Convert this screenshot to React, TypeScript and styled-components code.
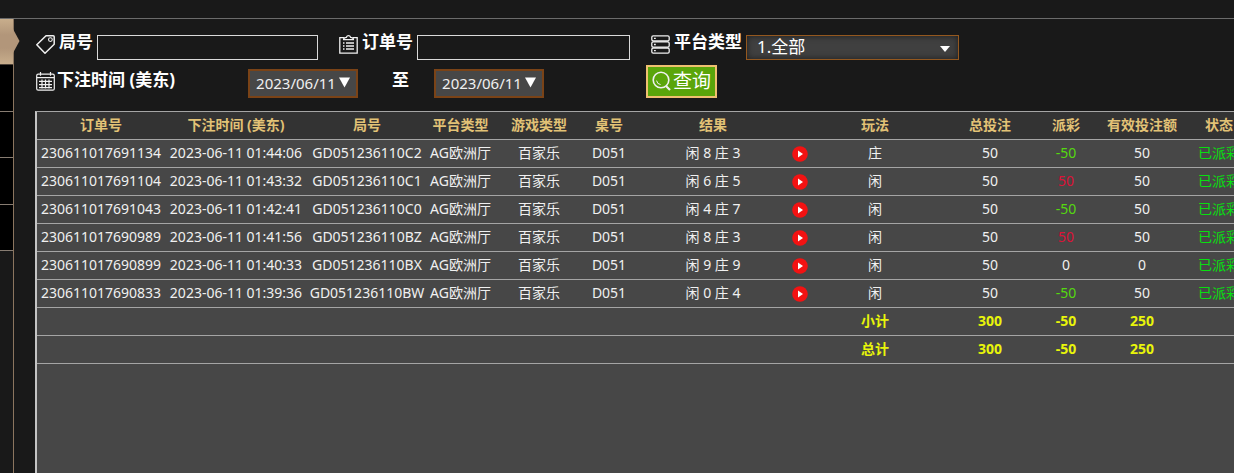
import React from "react";
import styled, { createGlobalStyle } from "styled-components";

const GlobalStyle = createGlobalStyle`
  *, *::before, *::after { box-sizing: border-box; }
  html, body, #root { height: 100%; }
  body {
    margin: 0;
    overflow: hidden;
    background: #191919;
    color: #f2f2f2;
    font-family: "Noto Sans", "Noto Sans CJK SC", sans-serif;
    font-size: 14px;
  }
  button, input, select { font-family: inherit; margin: 0; }
`;

const Page = styled.div`
  display: flex;
  flex-direction: column;
  height: 100%;
`;

const TopStrip = styled.header`
  flex: none;
  height: 19px;
  border-bottom: 1px solid #6b6b6b;
`;

const Body = styled.div`
  flex: 1;
  display: flex;
  min-height: 0;
`;

const Rail = styled.nav`
  flex: none;
  width: 14px;
  border-right: 1px solid #8b755f;
`;

const RailGroup = styled.div`
  display: flex;
  flex-direction: column;
  height: 186px;
`;

const RailTab = styled.button`
  flex: 1;
  width: 100%;
  padding: 0;
  border: 0;
  border-bottom: 1px solid #877c72;
  background: #000;
`;

const ActiveTab = styled.button`
  position: relative;
  display: block;
  width: 100%;
  height: 46px;
  padding: 0;
  border: 0;
  border-bottom: 1px solid #4d4238;
  background: linear-gradient(#c8ae8c, #b2967a 35%, #b2967a 65%, #c8ae8c);
`;

const TabPointer = styled.svg`
  position: absolute;
  left: 100%;
  top: 10px;
  z-index: 1;
`;

const Main = styled.main`
  flex: 1;
  min-width: 0;
  display: flex;
  flex-direction: column;
  padding: 16px 0 0 21px;
`;

const Filters = styled.form`
  flex: none;
  display: flex;
  flex-direction: column;
  gap: 5px;
  padding: 0 0 13px 1px;
`;

const FilterRow = styled.div`
  display: flex;
`;

const Field = styled.div<{ $width: number }>`
  flex: none;
  display: flex;
  align-items: flex-start;
  gap: 4px;
  width: ${(p) => p.$width}px;
  margin-right: 21px;
`;

const FieldLabel = styled.label`
  flex: none;
  font-size: 17px;
  font-weight: 700;
  line-height: 14px;
  color: #fff;
  white-space: nowrap;
`;

const TextInput = styled.input`
  flex: 1;
  min-width: 0;
  height: 25px;
  padding: 0 6px;
  border: 1px solid #d9d9d9;
  background: transparent;
  color: #fff;
  font-size: 15px;
`;

const SelectBox = styled.div`
  position: relative;
  flex: 1;
  min-width: 0;
`;

const Select = styled.select`
  display: block;
  width: 100%;
  height: 25px;
  padding: 0 24px 2px 10px;
  border: 1px solid #94581f;
  border-radius: 0;
  appearance: none;
  background: #404040;
  box-shadow: inset 0 0 6px #1c1c1c;
  color: #fff;
  font-size: 17px;
  line-height: 20px;
`;

const Caret = styled.svg`
  position: absolute;
  right: 9px;
  top: 11px;
  pointer-events: none;
`;

const DateGroup = styled.div`
  flex: none;
  display: flex;
  gap: 2px;
  width: 610px;
`;

const DateCaption = styled.span<{ $width: number; $indent?: number }>`
  flex: none;
  width: ${(p) => p.$width}px;
  padding-left: ${(p) => p.$indent ?? 0}px;
  font-size: 17px;
  font-weight: 700;
  line-height: 30px;
  color: #fff;
`;

const DateButton = styled.button`
  flex: none;
  align-self: flex-end;
  display: flex;
  align-items: center;
  justify-content: center;
  gap: 3px;
  width: 110px;
  height: 29px;
  padding: 0 0 2px;
  border: 2px solid #7a4317;
  background: #474747;
  color: #f0f0f0;
  font-size: 15px;
  line-height: 20px;
`;

const QueryButton = styled.button`
  flex: none;
  display: flex;
  align-items: center;
  justify-content: center;
  gap: 2px;
  width: 71px;
  height: 33px;
  padding: 0 0 2px;
  border: 2px solid #f0c070;
  background: #5aa50a;
  color: #fff;
  font-size: 19px;
  line-height: 24px;
`;

const IconSlot = styled.span`
  flex: none;
  display: flex;
  align-self: center;
  width: 19px;
  height: 19px;
`;

const TopIconSlot = styled(IconSlot)`
  align-self: flex-start;
`;

const TablePanel = styled.section`
  flex: 1;
  min-height: 0;
  overflow: hidden;
  border-left: 2px solid #c4c4c4;
  border-top: 1px solid #a5a5a5;
  background: #474747;
`;

const Table = styled.table`
  width: 100%;
  min-width: 1211px;
  table-layout: fixed;
  border-collapse: separate;
  border-spacing: 0;
`;

const HeadCell = styled.th`
  height: 28px;
  padding: 0 0 2px;
  border-bottom: 1px solid #a5a5a5;
  background: #333;
  color: #e2c276;
  font-weight: 700;
  line-height: 20px;
  white-space: nowrap;
`;

const Cell = styled.td<{ $color?: string }>`
  height: 28px;
  padding: 0 0 2px;
  border-bottom: 1px solid #a5a5a5;
  color: ${(p) => p.$color ?? "#f0f0f0"};
  line-height: 20px;
  text-align: center;
  white-space: nowrap;
`;

const TotalCell = styled(Cell)`
  color: #e8f50a;
  font-weight: 700;
`;

const PlayButton = styled.button`
  display: block;
  width: 16px;
  height: 16px;
  margin: 3px 0 0;
  padding: 0;
  border: 0;
  background: none;
`;

const line = { fill: "none", stroke: "#f0f0f0", strokeWidth: 1.5 };

const TagIcon = () => (
  <svg width="19" height="19" viewBox="0 0 19 19" {...line} strokeLinejoin="round">
    <path d="M10 .8h7.2q1 0 1 1v7.4L9 18.2.8 9.8z" />
    <circle cx="14.4" cy="4.6" r="1.9" strokeWidth="1.1" />
  </svg>
);

const ClipboardIcon = () => (
  <svg width="19" height="19" viewBox="0 0 19 19" {...line} strokeWidth="1.3">
    <path d="M5 2.7H.8v15.5h17.4V2.7H14M4.600 4.600q0-2.100 2.800-2.300Q8 .7 9.500.7t2.100 1.600q2.800.2 2.800 2.300z" />
    <path d="M4 8h1.500M7 8h8M4 11h1.500M7 11h8M4 14h1.500M7 14h8" />
  </svg>
);

const ServerIcon = () => (
  <svg width="19" height="19" viewBox="0 0 19 19" {...line} strokeWidth="1.3">
    <rect x=".8" y=".8" width="17.4" height="5.2" rx="1.4" />
    <rect x=".8" y="6.9" width="17.4" height="5.2" rx="1.4" />
    <rect x=".8" y="13" width="17.4" height="5.2" rx="1.4" />
    <path d="M3 3.400h1.800M3 9.500h1.800M3 15.600h1.800" />
  </svg>
);

const CalendarIcon = () => (
  <svg width="19" height="19" viewBox="0 0 19 19" {...line} strokeWidth="1.2">
    <rect x=".7" y="2.2" width="17.6" height="16" rx="1.5" />
    <path d="M.7 5.600h17.600M4.500 0v3.800M14.500 0v3.800M3 9.400h13M3 12.600h13M3 15.600h13M6 7.400v9.200M9.500 7.400v9.200M13 7.400v9.200" />
  </svg>
);

const SearchIcon = () => (
  <svg width="19" height="20" viewBox="0 0 19 20" {...line} strokeWidth="1.6">
    <circle cx="9" cy="9" r="7.8" />
    <path d="M4.600 9.600a4.600 4.600 0 0 0 4 4" strokeWidth="1" />
    <path d="M14 15l4 4" strokeWidth="2.2" />
  </svg>
);

const PlayIcon = () => (
  <svg width="16" height="16" viewBox="0 0 16 16">
    <circle cx="8" cy="8" r="7.8" fill="#f31212" />
    <path d="M6 4.400v7.200L11 8z" fill="#fff" />
  </svg>
);

const DownArrow = () => (
  <svg width="11" height="11" viewBox="0 0 11 11">
    <path d="M0 .5h11L5.500 10.500z" fill="#fff" />
  </svg>
);

const columns: [string, number][] = [
  ["订单号", 128],
  ["下注时间 (美东)", 142],
  ["局号", 120],
  ["平台类型", 67],
  ["游戏类型", 90],
  ["桌号", 50],
  ["结果", 158],
  ["", 16],
  ["玩法", 134],
  ["总投注", 96],
  ["派彩", 56],
  ["有效投注额", 96],
  ["状态", 58],
];

const bets = [
  ["230611017691134", "2023-06-11 01:44:06", "GD051236110C2", "闲 8 庄 3", "庄", -50, 50],
  ["230611017691104", "2023-06-11 01:43:32", "GD051236110C1", "闲 6 庄 5", "闲", 50, 50],
  ["230611017691043", "2023-06-11 01:42:41", "GD051236110C0", "闲 4 庄 7", "闲", -50, 50],
  ["230611017690989", "2023-06-11 01:41:56", "GD051236110BZ", "闲 8 庄 3", "闲", 50, 50],
  ["230611017690899", "2023-06-11 01:40:33", "GD051236110BX", "闲 9 庄 9", "闲", 0, 0],
  ["230611017690833", "2023-06-11 01:39:36", "GD051236110BW", "闲 0 庄 4", "闲", -50, 50],
] as const;

const payoutColor = (n: number) => (n < 0 ? "#55d80f" : n > 0 ? "#dc1237" : undefined);

export default function App() {
  return (
    <>
      <GlobalStyle />
      <Page>
        <TopStrip />
        <Body>
          <Rail>
            <ActiveTab type="button">
              <TabPointer width="7" height="24" viewBox="0 0 7 24">
                <path d="M0 0L6.500 12 0 24z" fill="#b2967a" />
              </TabPointer>
            </ActiveTab>
            <RailGroup>
              <RailTab type="button" />
              <RailTab type="button" />
              <RailTab type="button" />
              <RailTab type="button" />
            </RailGroup>
          </Rail>
          <Main>
            <Filters onSubmit={(e) => e.preventDefault()}>
              <FilterRow>
                <Field $width={282}>
                  <TopIconSlot><TagIcon /></TopIconSlot>
                  <FieldLabel htmlFor="round">局号</FieldLabel>
                  <TextInput id="round" />
                </Field>
                <Field $width={291}>
                  <TopIconSlot><ClipboardIcon /></TopIconSlot>
                  <FieldLabel htmlFor="order">订单号</FieldLabel>
                  <TextInput id="order" />
                </Field>
                <Field $width={308}>
                  <TopIconSlot><ServerIcon /></TopIconSlot>
                  <FieldLabel htmlFor="platform">平台类型</FieldLabel>
                  <SelectBox>
                    <Select id="platform" defaultValue="all">
                      <option value="all">1.全部</option>
                    </Select>
                    <Caret width="10" height="6" viewBox="0 0 10 6">
                      <path d="M0 0h10L5 6z" fill="#fff" />
                    </Caret>
                  </SelectBox>
                </Field>
              </FilterRow>
              <FilterRow>
                <DateGroup>
                  <IconSlot><CalendarIcon /></IconSlot>
                  <DateCaption $width={189}>下注时间 (美东)</DateCaption>
                  <DateButton type="button">2023/06/11<DownArrow /></DateButton>
                  <DateCaption $width={72} $indent={32}>至</DateCaption>
                  <DateButton type="button">2023/06/11<DownArrow /></DateButton>
                </DateGroup>
                <QueryButton type="submit"><SearchIcon />查询</QueryButton>
              </FilterRow>
            </Filters>
            <TablePanel>
              <Table>
                <colgroup>
                  {columns.map(([, width], i) => <col key={i} width={width} />)}
                </colgroup>
                <thead>
                  <tr>
                    {columns.map(([name], i) => <HeadCell key={i} scope="col">{name}</HeadCell>)}
                  </tr>
                </thead>
                <tbody>
                  {bets.map(([order, time, round, result, play, payout, valid]) => (
                    <tr key={order}>
                      <Cell>{order}</Cell>
                      <Cell>{time}</Cell>
                      <Cell>{round}</Cell>
                      <Cell>AG欧洲厅</Cell>
                      <Cell>百家乐</Cell>
                      <Cell>D051</Cell>
                      <Cell>{result}</Cell>
                      <Cell>
                        <PlayButton type="button" aria-label="播放"><PlayIcon /></PlayButton>
                      </Cell>
                      <Cell>{play}</Cell>
                      <Cell>50</Cell>
                      <Cell $color={payoutColor(payout)}>{payout}</Cell>
                      <Cell>{valid}</Cell>
                      <Cell $color="#08e010">已派彩</Cell>
                    </tr>
                  ))}
                </tbody>
                <tfoot>
                  {["小计", "总计"].map((name) => (
                    <tr key={name}>
                      <TotalCell colSpan={8} />
                      <TotalCell>{name}</TotalCell>
                      <TotalCell>300</TotalCell>
                      <TotalCell>-50</TotalCell>
                      <TotalCell>250</TotalCell>
                      <TotalCell />
                    </tr>
                  ))}
                </tfoot>
              </Table>
            </TablePanel>
          </Main>
        </Body>
      </Page>
    </>
  );
}
